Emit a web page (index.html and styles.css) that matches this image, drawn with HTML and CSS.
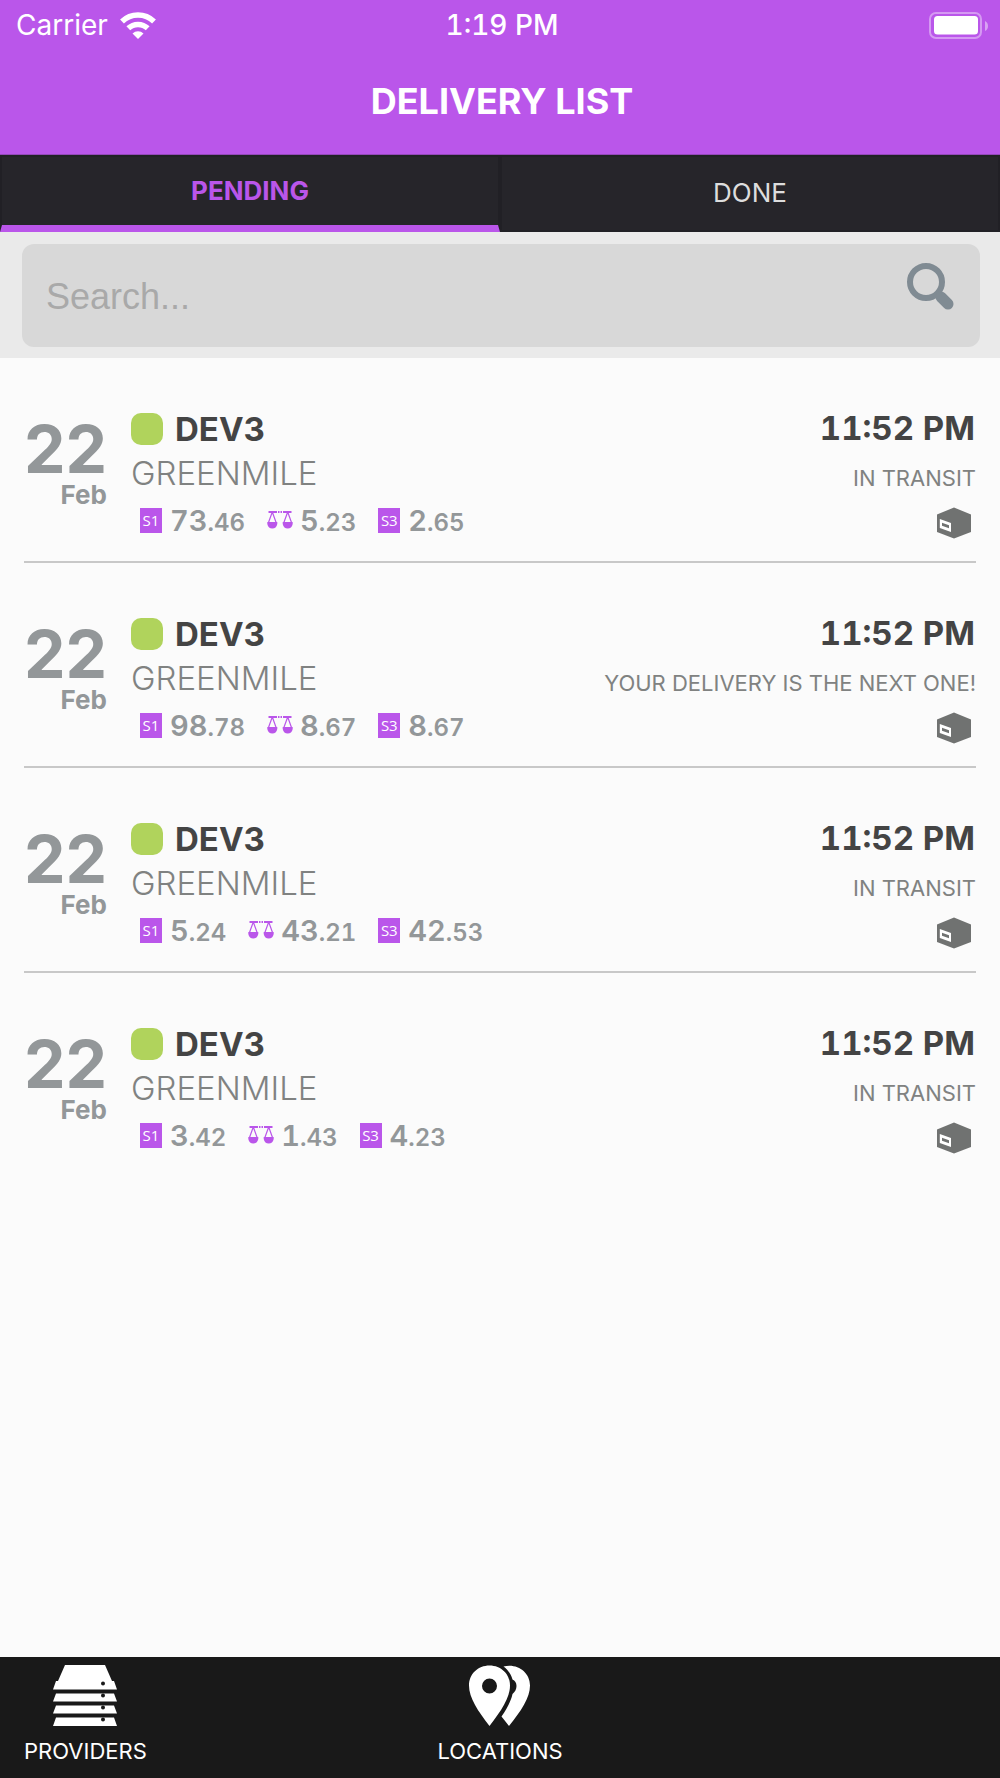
FILE: index.html
```html
<!DOCTYPE html>
<html lang="en">
<head>
    <meta charset="UTF-8">
    <meta name="viewport" content="width=device-width, initial-scale=1.0">
    <title>Delivery List</title>
    <link rel="stylesheet" href="styles.css">
</head>
<body>
    <!-- shared icons -->
    <svg class="sprite" aria-hidden="true">
        <symbol id="scales" viewBox="0 0 26 20">
            <path d="M1.500 1H10v2H1.500zM16 1h8.500v2H16zM11 1h1.500v2H11zM13.500 1H15v2h-1.500z"/>
            <path d="M5.300 2L1.500 12.500M5.300 2l3.800 10.500M20.700 2l-3.800 10.500M20.700 2l3.800 10.500" fill="none" stroke="currentColor" stroke-width="1.200"/>
            <path d="M0.300 12h10v2q-1 4.500-5 4.500t-5-4.500zM15.700 12h10v2q-1 4.500-5 4.500t-5-4.500z"/>
        </symbol>
        <symbol id="box" viewBox="0 0 34 32">
            <path d="M17 0.500L34 7.500V25L17 31.500 0 25V7.500z"/>
            <path d="M2.800 12l11.200 4v9L2.800 21z" fill="#fff"/>
            <path d="M5 15.800l7 2.500v3L5 18.800z"/>
        </symbol>
    </svg>

    <header class="header">
        <div class="status-bar">
            <div class="carrier">
                <span>Carrier</span>
                <svg width="36" height="27" viewBox="0 0 36 27">
                    <g fill="none" stroke="#fff" stroke-width="5.500">
                        <path d="M2 9.500a23 23 0 0 1 32 0"/>
                        <path d="M8.300 16.300a14 14 0 0 1 19.400 0"/>
                    </g>
                    <path d="M12.500 21.500a8 8 0 0 1 11 0L18 27z" fill="#fff"/>
                </svg>
            </div>
            <div class="clock">1:19 PM</div>
            <div class="battery">
                <svg width="59" height="27" viewBox="0 0 59 27">
                    <rect x="1" y="1" width="51" height="25" rx="6" fill="none" stroke="#fff" stroke-opacity="0.400" stroke-width="2"/>
                    <rect x="5" y="4" width="44" height="18.500" rx="3.500" fill="#fff"/>
                    <path d="M56 9q3 1.500 3 5t-3 5z" fill="#fff" fill-opacity="0.450"/>
                </svg>
            </div>
        </div>
        <h1 class="title">DELIVERY LIST</h1>
    </header>

    <nav class="tabs">
        <button class="tab active">PENDING</button>
        <button class="tab">DONE</button>
    </nav>

    <form class="search">
        <input class="search-input" type="text" placeholder="Search..." aria-label="Search">
        <button class="search-btn" type="button" aria-label="Search">
            <svg width="48" height="48" viewBox="0 0 48 48">
                <g fill="none" stroke="#808b93">
                    <circle cx="20" cy="20" r="16" stroke-width="6"/>
                    <path d="M31 31l4 4" stroke-width="8"/>
                    <path d="M35 35l7 7" stroke-width="11" stroke-linecap="round"/>
                </g>
            </svg>
        </button>
    </form>

    <main class="list">
        <article class="item">
            <div class="date"><span class="day">22</span><span class="month">Feb</span></div>
            <div class="info">
                <h2 class="name"><i class="dot"></i>DEV3</h2>
                <p class="company">GREENMILE</p>
                <div class="sizes">
                    <span class="size"><b class="tag">S1</b>73<small>.46</small></span>
                    <span class="size"><svg class="scales"><use href="#scales"/></svg>5<small>.23</small></span>
                    <span class="size"><b class="tag">S3</b>2<small>.65</small></span>
                </div>
            </div>
            <div class="state">
                <span class="time">11:52 PM</span>
                <span class="status">IN TRANSIT</span>
                <svg class="box"><use href="#box"/></svg>
            </div>
        </article>
        <article class="item">
            <div class="date"><span class="day">22</span><span class="month">Feb</span></div>
            <div class="info">
                <h2 class="name"><i class="dot"></i>DEV3</h2>
                <p class="company">GREENMILE</p>
                <div class="sizes">
                    <span class="size"><b class="tag">S1</b>98<small>.78</small></span>
                    <span class="size"><svg class="scales"><use href="#scales"/></svg>8<small>.67</small></span>
                    <span class="size"><b class="tag">S3</b>8<small>.67</small></span>
                </div>
            </div>
            <div class="state">
                <span class="time">11:52 PM</span>
                <span class="status">YOUR DELIVERY IS THE NEXT ONE!</span>
                <svg class="box"><use href="#box"/></svg>
            </div>
        </article>
        <article class="item">
            <div class="date"><span class="day">22</span><span class="month">Feb</span></div>
            <div class="info">
                <h2 class="name"><i class="dot"></i>DEV3</h2>
                <p class="company">GREENMILE</p>
                <div class="sizes">
                    <span class="size"><b class="tag">S1</b>5<small>.24</small></span>
                    <span class="size"><svg class="scales"><use href="#scales"/></svg>43<small>.21</small></span>
                    <span class="size"><b class="tag">S3</b>42<small>.53</small></span>
                </div>
            </div>
            <div class="state">
                <span class="time">11:52 PM</span>
                <span class="status">IN TRANSIT</span>
                <svg class="box"><use href="#box"/></svg>
            </div>
        </article>
        <article class="item">
            <div class="date"><span class="day">22</span><span class="month">Feb</span></div>
            <div class="info">
                <h2 class="name"><i class="dot"></i>DEV3</h2>
                <p class="company">GREENMILE</p>
                <div class="sizes">
                    <span class="size"><b class="tag">S1</b>3<small>.42</small></span>
                    <span class="size"><svg class="scales"><use href="#scales"/></svg>1<small>.43</small></span>
                    <span class="size"><b class="tag">S3</b>4<small>.23</small></span>
                </div>
            </div>
            <div class="state">
                <span class="time">11:52 PM</span>
                <span class="status">IN TRANSIT</span>
                <svg class="box"><use href="#box"/></svg>
            </div>
        </article>
    </main>

    <footer class="footer">
        <a class="link" href="#providers">
            <svg width="64" height="62" viewBox="0 0 64 62">
                <path d="M12 0h40l7 16h2l3 8.500H0L3 16h2z"/>
                <path d="M3 28.500h58l3 8H0zM3 40.500h58l3 8H0zM3 52.500h58l3 8.500H0z"/>
                <g fill="#191919">
                    <circle cx="50" cy="18.500" r="2"/>
                    <circle cx="50" cy="30.500" r="2"/>
                    <circle cx="50" cy="42.500" r="2"/>
                    <circle cx="50" cy="54.500" r="2"/>
                </g>
            </svg>
            <span>PROVIDERS</span>
        </a>
        <a class="link" href="#locations">
            <svg width="62" height="62" viewBox="0 0 62 62">
                <path fill-rule="evenodd" d="M20.500 0.500C32 0.500 41 9 41 20.500 41 33 32 46 20.500 61 9 46 0 33 0 20.500 0 9 9 0.500 20.500 0.500zM20.500 13.500a7.500 7.500 0 1 0 0 15 7.500 7.500 0 0 0 0-15z"/>
                <path d="M34.500 1.500C48 -2 61 7 61 20.500 61 33 52 46 40 61L32.500 51.500C38 43.500 42 36 43.500 29c2.500-2 4-5 4-8s-1.500-5.500-4-6.500C42 9 39 5 34.500 1.500z"/>
            </svg>
            <span>LOCATIONS</span>
        </a>
    </footer>
</body>
</html>
```
FILE: styles.css
```css
* {
    box-sizing: border-box;
    margin: 0;
    padding: 0;
}

body {
    display: flex;
    flex-direction: column;
    min-height: 100vh;
    background: #fbfbfb;
    font-family: Inter, Roboto, sans-serif;
}

svg {
    display: block;
    fill: currentColor;
}

.sprite {
    position: absolute;
    width: 0;
    height: 0;
}

/* header */
.header {
    padding: 8px 12px 31px 16px;
    background: #ba56ea;
    border-bottom: 1px solid #9448ba;
    color: #fff;
}

.status-bar {
    display: grid;
    grid-template-columns: 1fr auto 1fr;
    align-items: center;
    font-size: 28px;
    line-height: 34px;
}

.carrier {
    display: flex;
    align-items: center;
    gap: 12px;
}

.clock {
    font-weight: 500;
    font-variant-numeric: tabular-nums;
}

.battery {
    justify-self: end;
}

.title {
    margin-top: 37px;
    font-size: 36px;
    font-weight: 700;
    line-height: 44px;
    text-align: center;
}

/* tabs */
.tabs {
    display: flex;
}

.tab {
    flex: 1;
    height: 77px;
    padding-bottom: 2px;
    background: #26252a;
    border: 2px solid #212025;
    color: #ddd;
    font-family: inherit;
    font-size: 26px;
}

.tab.active {
    border-bottom: 7px solid #ba56ea;
    color: #ba56ea;
    font-weight: 700;
}

/* search */
.search {
    position: relative;
    padding: 12px 20px 11px 22px;
    background: #eaeaea;
}

.search-input {
    display: block;
    width: 100%;
    height: 103px;
    padding: 2px 96px 0 24px;
    background: #d8d8d8;
    border: none;
    border-radius: 12px;
    font-family: "Liberation Sans", Arial, sans-serif;
    font-size: 36px;
}

.search-input::placeholder {
    color: #a9a9a9;
}

.search-btn {
    position: absolute;
    top: 30px;
    right: 46px;
    background: none;
    border: none;
}

/* delivery list */
.list {
    flex: 1;
    padding: 0 24px;
}

.item {
    display: flex;
    height: 205px;
    padding-top: 51px;
    border-bottom: 2px solid #c8c8c8;
}

.item:last-child {
    border-bottom: none;
}

.date {
    display: flex;
    flex-direction: column;
    width: 83px;
    padding-top: 9px;
    color: #939799;
    font-weight: 700;
}

.day {
    font-size: 66px;
    line-height: 62px;
}

.month {
    font-size: 26px;
    line-height: 30px;
    text-align: right;
}

.info {
    flex: 1;
    padding-left: 24px;
}

.name {
    display: flex;
    align-items: center;
    gap: 12px;
    color: #444;
    font-size: 33px;
    font-weight: 700;
    line-height: 40px;
}

.dot {
    width: 32px;
    height: 32px;
    background: #b0d35c;
    border-radius: 10px;
}

.company {
    color: #808281;
    font-size: 33px;
    font-weight: 300;
    line-height: 48px;
}

.sizes {
    display: flex;
    gap: 22px;
    padding-left: 9px;
    color: #939799;
    font-size: 29px;
    font-weight: 600;
    font-variant-numeric: tabular-nums;
    line-height: 48px;
}

.size {
    display: flex;
    align-items: baseline;
}

.size small {
    font-size: 24px;
}

.tag {
    align-self: center;
    width: 22px;
    height: 25px;
    margin: 0 8px 4px 0;
    background: #ba56ea;
    color: #fff;
    font-family: "Open Sans", sans-serif;
    font-size: 15px;
    font-weight: 400;
    line-height: 25px;
    text-align: center;
}

.scales {
    align-self: center;
    width: 26px;
    height: 20px;
    margin: 0 7px 4px 0;
    color: #ba56ea;
}

.state {
    display: flex;
    flex-direction: column;
    align-items: flex-end;
}

.time {
    padding-right: 1px;
    color: #444;
    font-size: 33px;
    font-weight: 700;
    font-variant-numeric: tabular-nums;
    line-height: 38px;
}

.status {
    margin-top: 17px;
    color: #808281;
    font-size: 22px;
    line-height: 28px;
}

.box {
    width: 34px;
    height: 32px;
    margin: 15px 5px 0 0;
    color: #707271;
}

/* bottom bar */
.footer {
    display: grid;
    grid-template-columns: 1fr auto 1fr;
    height: 121px;
    padding: 8px 24px 0;
    background: #191919;
}

.link {
    display: flex;
    flex-direction: column;
    align-items: center;
    gap: 10px;
    justify-self: start;
    color: #fff;
    font-size: 22px;
    line-height: 28px;
    text-decoration: none;
}
```
